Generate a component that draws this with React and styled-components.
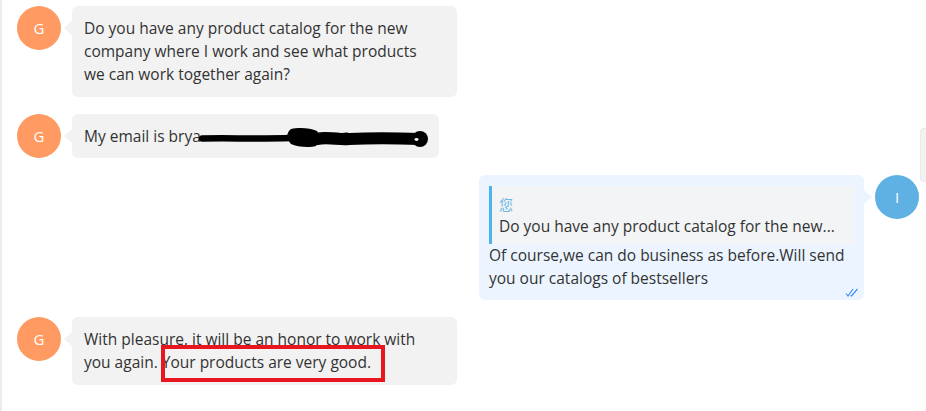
import React from "react";
import styled, { createGlobalStyle } from "styled-components";

const COLORS = {
  text: "#333333",
  peer: "#f2f2f2",
  mine: "#ecf5ff",
  orange: "#fe9a62",
  blue: "#5eb1e2",
  quoteBar: "#4cb3ee",
  quoteBg: "#f2f4f5",
  check: "#3d8ff0",
};

const GlobalStyle = createGlobalStyle`
  html, body {
    margin: 0;
    padding: 0;
    background: #ffffff;
  }
  body {
    font-family: "Open Sans", "Noto Sans", "Noto Sans CJK SC", sans-serif;
    color: ${COLORS.text};
  }
`;

const Page = styled.div`
  position: relative;
  width: 926px;
  height: 411px;
  box-sizing: border-box;
  border-left: 2px solid #ececec;
  overflow: hidden;
`;

const List = styled.div`
  display: flex;
  flex-direction: column;
  gap: 17px;
  padding: 6px 7px 0 15px;
`;

const Row = styled.div`
  display: flex;
  align-items: flex-start;
  gap: 11px;
  flex-direction: ${(p) => (p.$mine ? "row-reverse" : "row")};
`;

const Avatar = styled.div`
  flex: none;
  width: 44px;
  height: 44px;
  border-radius: 50%;
  background: ${(p) => p.$color};
  color: #ffffff;
  font-size: 15px;
  display: flex;
  align-items: center;
  justify-content: center;
`;

const Bubble = styled.div`
  position: relative;
  max-width: 385px;
  box-sizing: border-box;
  padding: ${(p) => (p.$mine ? "11px 10px 10px" : "11px 18px 11px 12px")};
  border-radius: 6px;
  background: ${(p) => (p.$mine ? COLORS.mine : COLORS.peer)};
  font-size: 15.5px;
  line-height: 23px;
  ${(p) => p.$mine && "width: 385px;"}
  ${(p) => p.$nowrap && "white-space: nowrap; padding: 11px 10px 10px 12px;"}

  &::before {
    content: "";
    position: absolute;
    top: 15px;
    ${(p) => (p.$mine ? "right: -8px;" : "left: -8px;")}
    border-top: 7px solid transparent;
    border-bottom: 7px solid transparent;
    ${(p) =>
      p.$mine
        ? `border-left: 8px solid ${COLORS.mine};`
        : `border-right: 8px solid ${COLORS.peer};`}
  }
`;

const Quote = styled.div`
  background: ${COLORS.quoteBg};
  border-left: 3px solid ${COLORS.quoteBar};
  padding: 8px 8px 6px 7px;
`;

const QuoteName = styled.div`
  font-size: 14px;
  line-height: 21px;
  color: #6cb8e6;
`;

const QuoteText = styled.div`
  white-space: nowrap;
`;

const Ticks = styled.svg`
  position: absolute;
  right: 5px;
  bottom: 3px;
`;

const Scribble = styled.svg`
  display: inline-block;
  vertical-align: top;
  margin-left: -2px;
`;

const Highlight = styled.div`
  position: absolute;
  left: 89px;
  top: 28px;
  width: 224px;
  height: 37px;
  box-sizing: border-box;
  border: 4px solid #e8161f;
  pointer-events: none;
`;

const SideTab = styled.div`
  position: absolute;
  right: 0;
  top: 128px;
  width: 5px;
  height: 52px;
  background: #f2f2f2;
  border: 1px solid #e9e9e9;
  border-right: none;
  border-radius: 4px 0 0 4px;
`;

const DoubleCheck = () => (
  <Ticks width="14" height="9" viewBox="0 0 14 9" fill="none">
    <path d="M1 5.5 L3 8 L8 1" stroke={COLORS.check} strokeWidth="1.2" />
    <path d="M5.5 7.5 L6.5 8 L12.5 1" stroke={COLORS.check} strokeWidth="1.2" />
  </Ticks>
);

const InkMark = () => (
  <Scribble width="230" height="23" viewBox="0 0 230 23" fill="none">
    <path
      d="M3 13.5 C30 13 60 14 92 13"
      stroke="#000"
      strokeWidth="6.5"
      strokeLinecap="round"
    />
    <path
      d="M92 4 C100 2 112 3 118 6 C121 10 121 17 117 21 C110 23 98 22 92 19 C87 14 87 8 92 4 Z"
      fill="#000"
    />
    <path
      d="M118 14 C130 12 140 15 150 14 C170 13 195 13 220 14"
      stroke="#000"
      strokeWidth="12"
      strokeLinecap="round"
    />
    <path
      d="M120 10 C130 8 140 12 148 10"
      stroke="#000"
      strokeWidth="5"
      strokeLinecap="round"
    />
    <circle cx="221" cy="14" r="8" fill="#000" />
    <ellipse cx="217.5" cy="14.5" rx="2" ry="1.4" fill="#f2f2f2" />
  </Scribble>
);

const App = () => {
  return (
    <>
      <GlobalStyle />
      <Page>
        <List>
          <Row>
            <Avatar $color={COLORS.orange}>G</Avatar>
            <Bubble>
              Do you have any product catalog for the new company where I work
              and see what products we can work together again?
            </Bubble>
          </Row>
          <Row>
            <Avatar $color={COLORS.orange}>G</Avatar>
            <Bubble $nowrap>
              My email is brya
              <InkMark />
            </Bubble>
          </Row>
          <Row $mine>
            <Avatar $color={COLORS.blue}>I</Avatar>
            <Bubble $mine>
              <Quote>
                <QuoteName>您</QuoteName>
                <QuoteText>Do you have any product catalog for the new...</QuoteText>
              </Quote>
              Of course,we can do business as before.Will send you our catalogs
              of bestsellers
              <DoubleCheck />
            </Bubble>
          </Row>
          <Row>
            <Avatar $color={COLORS.orange}>G</Avatar>
            <Bubble>
              With pleasure, it will be an honor to work with you again. Your
              products are very good.
              <Highlight />
            </Bubble>
          </Row>
        </List>
        <SideTab />
      </Page>
    </>
  );
};

export default App;
